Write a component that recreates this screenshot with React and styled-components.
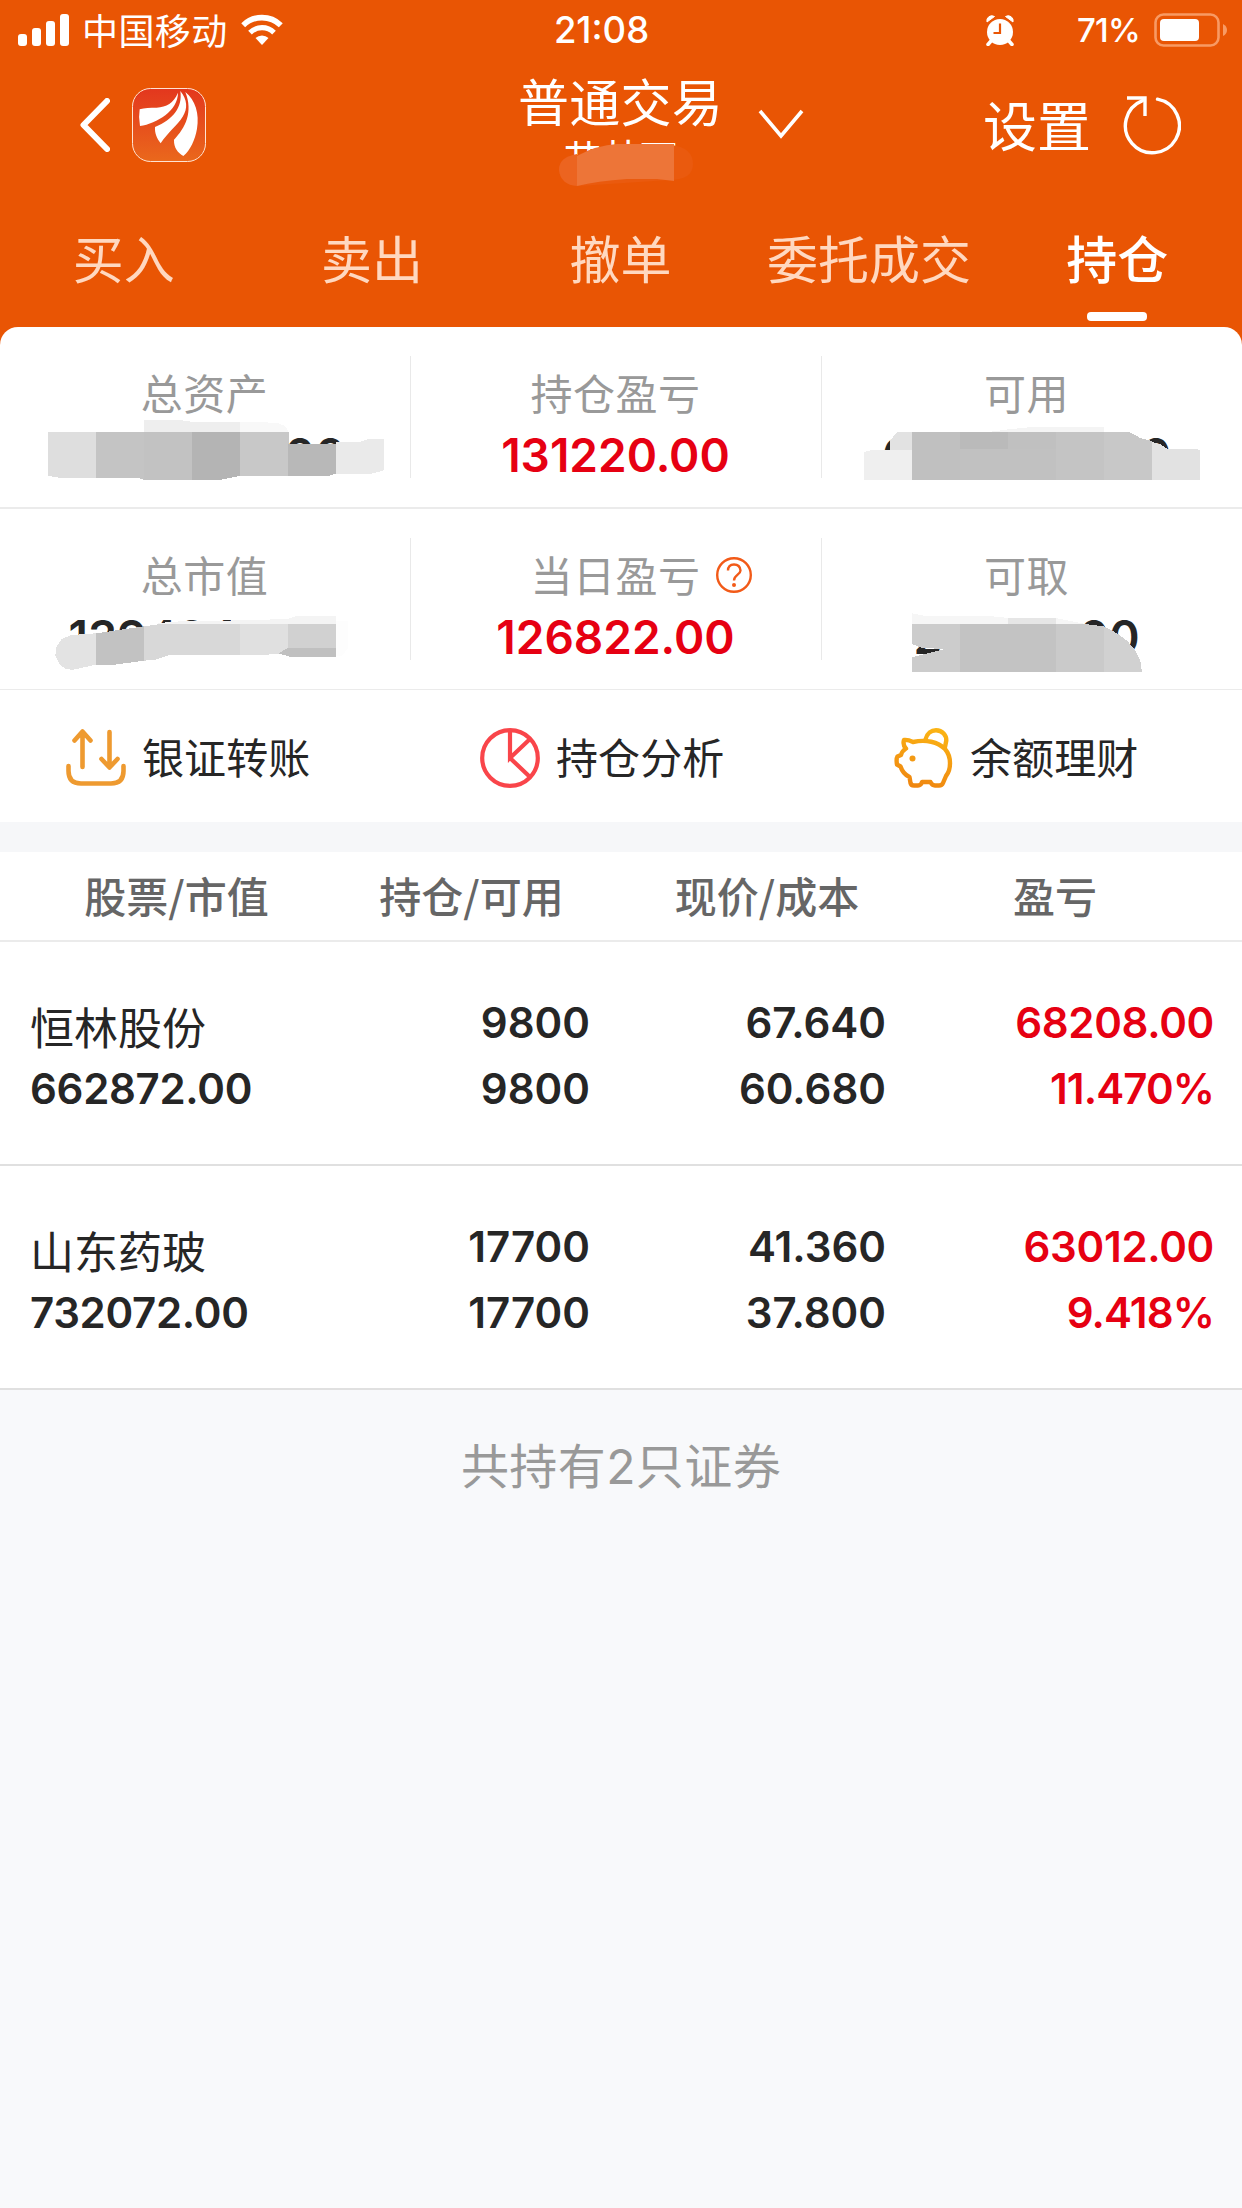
import React from "react";
import styled, { createGlobalStyle } from "styled-components";

const cjk = `"Noto Sans CJK SC", sans-serif`;
const latin = `Inter, "Noto Sans CJK SC", sans-serif`;

const GlobalStyle = createGlobalStyle`
  * {
    box-sizing: border-box;
  }

  body {
    margin: 0;
    background: #f8f9fb;
    font-family: ${cjk};
    color: #262626;
  }
`;

const Page = styled.div`
  width: 1242px;
  min-height: 2208px;
  background: #f8f9fb;
  overflow: hidden;
`;

const Header = styled.header`
  height: 347px;
  background: #e95504;
  color: #fff;
`;

const StatusBar = styled.div`
  display: grid;
  grid-template-columns: 1fr auto 1fr;
  align-items: center;
  height: 60px;
  padding: 0 14px 0 18px;
`;

const StatusLeft = styled.div`
  display: flex;
  align-items: center;
`;

const StatusRight = styled.div`
  display: flex;
  align-items: center;
  justify-content: flex-end;
`;

const Carrier = styled.span`
  margin: 0 13px 0 12px;
  padding-bottom: 3px;
  font-size: 36px;
  letter-spacing: 0.4px;
  line-height: 56px;
`;

const Clock = styled.span`
  margin-right: 43px;
  font-family: ${latin};
  font-size: 36.5px;
  font-weight: 500;
  line-height: 60px;
`;

const BatteryText = styled.span`
  margin: 0 14px 0 63px;
  font-family: ${latin};
  font-size: 33px;
  font-weight: 500;
  letter-spacing: -0.8px;
  line-height: 60px;
`;

const NavBar = styled.div`
  display: grid;
  grid-template-columns: 1fr auto 1fr;
  height: 148px;
  padding: 0 61px 0 80px;
`;

const NavLeft = styled.div`
  display: flex;
  align-items: center;
  gap: 22px;
  height: 130px;
`;

const NavRight = styled.div`
  display: flex;
  align-items: center;
  justify-content: flex-end;
  gap: 32px;
  height: 130px;
`;

const AccountPicker = styled.div`
  display: flex;
  gap: 35px;
  margin-left: 61px;
  padding-top: 5px;
`;

const AccountNames = styled.div`
  position: relative;
  display: flex;
  flex-direction: column;
  align-items: center;
`;

const AccountType = styled.span`
  font-size: 51px;
  letter-spacing: 0.3px;
  line-height: 70px;
`;

const AccountOwner = styled.span`
  font-size: 38px;
  line-height: 40px;
`;

const OwnerMask = styled.svg`
  position: absolute;
  left: 39px;
  top: 75px;
`;

const PickerArrow = styled.svg`
  margin-top: 44px;
`;

const Settings = styled.span`
  padding-bottom: 3px;
  font-size: 54px;
  line-height: 70px;
`;

const Tabs = styled.nav`
  display: flex;
  height: 119px;
`;

const Tab = styled.div`
  flex: 1;
  display: flex;
  flex-direction: column;
  align-items: center;
  padding: 13px 1px 0 0;
  font-size: 51px;
  line-height: 72px;
  font-weight: ${(props) => (props.$active ? 500 : 400)};
  color: ${(props) => (props.$active ? "#fff" : "#ffd8c0")};
`;

const TabMark = styled.span`
  width: 60px;
  height: 9px;
  margin-top: 19px;
  border-radius: 4px;
  background: #fff;
`;

const Card = styled.section`
  margin-top: -20px;
  border-radius: 18px 18px 0 0;
  background: #fff;
`;

const SummaryRow = styled.div`
  display: flex;
  height: ${(props) => (props.$last ? 181 : 182)}px;
  border-bottom: ${(props) => (props.$last ? "1px" : "2px")} solid #ebebeb;
`;

const SummaryCell = styled.div`
  position: relative;
  display: flex;
  flex-direction: column;
  align-items: center;
  width: 411px;
  padding: 35px 2px 0 0;
  background: ${(props) =>
    props.$divided
      ? "linear-gradient(#e9e9e9, #e9e9e9) right 29px / 1px 122px no-repeat"
      : "none"};
`;

const SummaryLabel = styled.div`
  position: relative;
  font-size: 42px;
  letter-spacing: 0.5px;
  line-height: 60px;
  color: #999;
`;

const HelpIcon = styled.svg`
  position: absolute;
  left: 186px;
  top: 13px;
`;

const SummaryValue = styled.div`
  display: flex;
  justify-content: space-between;
  width: ${(props) => (props.$width ? `${props.$width}px` : "auto")};
  margin-top: 3px;
  font-family: ${latin};
  font-size: 46px;
  font-weight: 600;
  line-height: 60px;
  color: ${(props) => (props.$red ? "#e60012" : "#262626")};
`;

const MaskLayer = styled.svg`
  position: absolute;
  left: 0;
  top: 0;
  width: 411px;
  height: 182px;
`;

const Actions = styled.div`
  display: flex;
  height: 132px;
`;

const Action = styled.div`
  display: flex;
  align-items: center;
  gap: 16px;
  width: 414px;
  padding: 4px 0 0 66px;
`;

const ActionLabel = styled.span`
  padding-bottom: 5px;
  font-size: 42px;
  letter-spacing: 0.1px;
  line-height: 60px;
`;

const Gap = styled.div`
  height: 30px;
  background: #f6f7f9;
`;

const Holdings = styled.section`
  background: #fff;
`;

const HoldingsHead = styled.div`
  display: grid;
  grid-template-columns: 295px 295px 296px 280px;
  height: 90px;
  padding-left: 29px;
  border-bottom: 2px solid #ebebeb;
`;

const HeadCell = styled.div`
  text-align: center;
  font-size: 42px;
  font-weight: 500;
  line-height: 86px;
  color: #666;
`;

const HoldingRow = styled.div`
  display: grid;
  grid-template-columns: 265px 295px 296px 328px;
  height: 224px;
  padding: 48px 28px 0 30px;
  border-bottom: 2px solid #e0e0e0;
`;

const HoldingCell = styled.div`
  display: flex;
  flex-direction: column;
  align-items: ${(props) => (props.$left ? "flex-start" : "flex-end")};
  font-family: ${latin};
  font-size: 42px;
  font-weight: 600;
  letter-spacing: ${(props) => (props.$left || props.$red ? "-0.3px" : "0")};
  line-height: 66px;
  color: ${(props) => (props.$red ? "#e60012" : "#262626")};
`;

const Percent = styled.span`
  letter-spacing: -0.9px;
`;

const StockName = styled.span`
  height: 66px;
  font-family: ${cjk};
  font-size: 44px;
  font-weight: 400;
  letter-spacing: 0;
  line-height: 72px;
`;

const Total = styled.p`
  margin: 0;
  padding-top: 37px;
  text-align: center;
  font-size: 48px;
  letter-spacing: 0.4px;
  line-height: 72px;
  color: #999;
`;

const TotalCount = styled.span`
  font-family: ${latin};
  font-weight: 400;
`;

const SignalIcon = () => (
  <svg width="52" height="32" viewBox="0 0 52 32" fill="#fff">
    <rect x="0" y="20" width="9" height="12" rx="3" />
    <rect x="14" y="14" width="9" height="18" rx="3" />
    <rect x="28" y="7" width="9" height="25" rx="3" />
    <rect x="42" y="0" width="9" height="32" rx="3" />
  </svg>
);

const WifiIcon = () => (
  <svg width="42" height="32" viewBox="0 0 42 32">
    <path d="M2.2 11.2a27 27 0 0 1 37.6 0" fill="none" stroke="#fff" strokeWidth="5.6" />
    <path d="M9 18.6a17 17 0 0 1 24 0" fill="none" stroke="#fff" strokeWidth="5.2" />
    <path d="M14.5 24a9.5 9.5 0 0 1 13 0L21 31z" fill="#fff" />
  </svg>
);

const AlarmIcon = () => (
  <svg width="28" height="31" viewBox="0 0 28 31">
    <circle cx="14" cy="17" r="13" fill="#fff" />
    <path d="M1 7a5 5 0 0 1 7.5-5.5zM27 7a5 5 0 0 0-7.5-5.5z" fill="#fff" stroke="#fff" />
    <path d="M5 26l-3 3.5M23 26l3 3.5" stroke="#fff" strokeWidth="3.5" strokeLinecap="round" />
    <path d="M14 8.5v9.5H7.5" fill="none" stroke="#e95504" strokeWidth="2.2" />
  </svg>
);

const BatteryIcon = () => (
  <svg width="74" height="34" viewBox="0 0 74 34">
    <rect x="1.5" y="1.5" width="63" height="31" rx="8" fill="none" stroke="#f89a64" strokeWidth="2.6" />
    <rect x="6" y="6" width="39" height="22" rx="4" fill="#fff" />
    <path d="M69 11q4 2 4 6t-4 6z" fill="#f89a64" />
  </svg>
);

const BackIcon = () => (
  <svg width="30" height="54" viewBox="0 0 30 54">
    <path d="M27 3L3.5 27 27 51" fill="none" stroke="#fff" strokeWidth="6" strokeLinecap="round" strokeLinejoin="round" />
  </svg>
);

const AppLogo = () => (
  <svg width="74" height="74" viewBox="0 0 222 222">
    <defs>
      <linearGradient id="logoBg" x1="0" y1="0" x2="0" y2="1">
        <stop offset="0" stopColor="#e3371e" />
        <stop offset="1" stopColor="#ea681c" />
      </linearGradient>
    </defs>
    <rect x="1.5" y="1.5" width="219" height="219" rx="54" fill="url(#logoBg)" stroke="#ffe3d2" strokeWidth="3" />
    <g fill="#fff">
      <path d="M23 64Q19 88 24 114C75 106 138 68 138 14 124 46 104 56 74 59 54 59 38 60 23 64z" />
      <path d="M145 9C166 34 168 62 152 86 136 112 108 132 86 166 74 150 68 136 69 117 124 94 152 58 145 9z" />
      <path d="M160 12C190 36 203 78 195 122 189 156 175 186 154 204 138 194 125 180 126 155 160 120 184 72 160 12z" />
    </g>
  </svg>
);

const RefreshIcon = () => (
  <svg width="58" height="59" viewBox="0 0 58 59" fill="none" stroke="#fff" strokeWidth="3.4">
    <path d="M34.5 3.2A27 27 0 1 1 19.500 4.600" strokeLinecap="round" />
    <path d="M4 2h18v18" />
  </svg>
);

const TransferIcon = () => (
  <svg width="60" height="60" viewBox="0 0 60 60" fill="none" stroke="#ee9a30" strokeWidth="4.6" strokeLinecap="round" strokeLinejoin="round">
    <path d="M16.5 39V4M8.5 12.5l8-9 8 9" />
    <path d="M43.5 4v35M35.5 31l8 8.500 8-8.500" />
    <path d="M2.5 38v5Q2.500 55.500 15 55.500h30Q57.500 55.500 57.500 43v-5" />
  </svg>
);

const PieIcon = () => (
  <svg width="60" height="60" viewBox="0 0 60 60" fill="none" stroke="#f9454a" strokeWidth="4.2">
    <circle cx="30" cy="30" r="27.8" />
    <path d="M30 2v28l20-19M30 30l20 19" />
  </svg>
);

const PiggyIcon = () => (
  <svg width="60" height="60" viewBox="0 0 60 60" fill="none" strokeWidth="4.4" strokeLinejoin="round" strokeLinecap="round">
    <defs>
      <linearGradient id="piggy" gradientUnits="userSpaceOnUse" x1="40" y1="0" x2="25" y2="60">
        <stop offset="0" stopColor="#fbb414" />
        <stop offset="1" stopColor="#ef8610" />
      </linearGradient>
    </defs>
    <g stroke="url(#piggy)">
      <path d="M10 12Q14 11.500 19 14C32 11 44 14 51 21 58 29 57 42 52 48L49 55Q48 57.500 45 57.500H41Q38 57.500 36.500 54H28Q27 57.500 24 57.500H20Q17 57.500 16.500 55L15.500 49Q9 46 6.500 38.500L3 36.500Q2 31 3.500 28.500L7 27Q8 23 12 20.500 8.500 17 10 12z" />
      <path d="M31.500 11.500C33 5 37.500 2.300 42 2.300 48.500 2.300 52.500 7.500 52.300 12.500L51 19" />
    </g>
    <circle cx="18.5" cy="30.5" r="3" fill="#f39a14" />
  </svg>
);

// mosaic patches, three units to a pixel, measured from the cell's corner
const masks = {
  assets: [
    ["432,279 540,279 580,285 720,285 720,315 432,315", "#eeeeee"],
    ["720,285 830,287 855,297 866,315 720,315", "#f8f8f8"],
    ["144,315 288,315 288,452 175,452 144,446", "#dedede"],
    ["288,315 432,315 432,458 412,452 288,452", "#c4c4c4"],
    ["432,315 576,315 576,458 432,458", "#c2c2c2"],
    ["576,315 720,315 720,447 665,458 576,458", "#b4b4b4"],
    ["720,315 866,315 866,447 720,447", "#c8c8c8"],
    ["864,351 1008,351 1008,440 985,447 864,447", "#b8b8b8"],
    ["1008,345 1080,345 1105,336 1152,336 1152,430 1110,441 1008,441", "#eaeaea"],
  ],
  market: [
    ["465,345 510,338 720,334 864,330 890,321 1008,321 1008,345", "#f4f4f4"],
    ["1008,335 1045,335 1045,418 1025,440 1008,440", "#fdfdfd"],
    ["288,373 215,378 185,390 168,415 166,440 178,465 198,481 220,482 288,467", "#e3e3e3"],
    ["288,373 432,352 432,455 345,467 288,467", "#c2c2c2"],
    ["432,352 480,345 720,345 720,438 510,438 462,453 432,455", "#d8d8d8"],
    ["720,345 864,345 864,440 845,433 790,438 720,438", "#e0e0e0"],
    ["864,345 1008,345 1008,417 864,417", "#d1d1d1"],
    ["890,417 1008,417 1008,443 870,443 835,433 864,417", "#c0c0c0"],
  ],
  available: [
    ["500,315 560,307 620,301 846,301 846,315", "#f4f4f4"],
    ["205,372 205,340 225,315 270,315 270,372", "#e2e2e2"],
    ["126,375 150,369 270,369 270,459 126,459", "#efefef"],
    ["270,315 414,315 414,459 270,459", "#c0c0c0"],
    ["414,315 558,315 558,366 414,366", "#bababa"],
    ["558,315 702,315 702,366 558,366", "#c0c0c0"],
    ["414,366 702,366 702,459 414,459", "#c1c1c1"],
    ["702,315 846,315 846,459 702,459", "#c4c4c4"],
    ["846,315 922,315 955,333 990,342 990,459 846,459", "#c8c8c8"],
    ["990,345 1015,352 1035,365 1120,365 1134,370 1134,459 990,459", "#e2e2e2"],
  ],
  withdrawable: [
    ["270,313 310,321 500,321 560,327 702,327 790,345 270,345", "#f6f6f6"],
    ["558,327 702,327 702,345 558,345", "#e6e6e6"],
    ["270,345 414,345 414,489 270,489 270,445 365,421 330,418 300,417 270,405", "#cccccc"],
    ["414,345 702,345 702,489 414,489", "#c3c3c3"],
    ["702,345 790,345 846,352 846,489 702,489", "#cacaca"],
    ["846,352 885,373 915,395 940,425 955,455 960,489 846,489", "#d1d1d1"],
  ],
};

const Mask = ({ patches }) => (
  <MaskLayer viewBox="0 0 1233 546" shapeRendering="crispEdges">
    {patches.map(([points, fill]) => (
      <polygon key={points} points={points} fill={fill} />
    ))}
  </MaskLayer>
);

const tabs = ["买入", "卖出", "撤单", "委托成交", "持仓"];

const summary = [
  [
    { label: "总资产", parts: ["", "00"], width: 282, mask: "assets" },
    { label: "持仓盈亏", value: "131220.00" },
    { label: "可用", parts: ["6", "0"], width: 289, mask: "available" },
  ],
  [
    { label: "总市值", parts: ["1394944.00"], mask: "market" },
    { label: "当日盈亏", value: "126822.00", help: true },
    { label: "可取", parts: ["2", "00"], width: 226, mask: "withdrawable" },
  ],
];

const actions = [
  { label: "银证转账", icon: <TransferIcon /> },
  { label: "持仓分析", icon: <PieIcon /> },
  { label: "余额理财", icon: <PiggyIcon /> },
];

const columns = ["股票/市值", "持仓/可用", "现价/成本", "盈亏"];

const holdings = [
  {
    name: "恒林股份",
    market: "662872.00",
    amount: ["9800", "9800"],
    price: ["67.640", "60.680"],
    profit: ["68208.00", "11.470%"],
  },
  {
    name: "山东药玻",
    market: "732072.00",
    amount: ["17700", "17700"],
    price: ["41.360", "37.800"],
    profit: ["63012.00", "9.418%"],
  },
];

function App() {
  return (
    <Page>
      <GlobalStyle />
      <Header>
        <StatusBar>
          <StatusLeft>
            <SignalIcon />
            <Carrier>中国移动</Carrier>
            <WifiIcon />
          </StatusLeft>
          <Clock>21:08</Clock>
          <StatusRight>
            <AlarmIcon />
            <BatteryText>71%</BatteryText>
            <BatteryIcon />
          </StatusRight>
        </StatusBar>

        <NavBar>
          <NavLeft>
            <BackIcon />
            <AppLogo />
          </NavLeft>
          <AccountPicker>
            <AccountNames>
              <AccountType>普通交易</AccountType>
              <AccountOwner>艹廾丁</AccountOwner>
              <OwnerMask width="138" height="48" viewBox="0 0 138 48">
                <path d="M20 15Q50 3 70 5H115Q136 8 136 24T112 40L22 46Q2 44 2 30T20 15z" fill="#ea5a0e" />
                <path d="M2 30Q2 17 20 14V46Q4 45 2 30z" fill="#ec6420" />
                <path d="M20 16Q40 5 60 4H117V41L100 39H70Q40 41 20 46z" fill="#ed7538" />
              </OwnerMask>
            </AccountNames>
            <PickerArrow width="46" height="30" viewBox="0 0 46 30">
              <path d="M2 2l21 25L44 2" fill="none" stroke="#fff" strokeWidth="3.6" />
            </PickerArrow>
          </AccountPicker>
          <NavRight>
            <Settings>设置</Settings>
            <RefreshIcon />
          </NavRight>
        </NavBar>

        <Tabs>
          {tabs.map((tab) => (
            <Tab key={tab} $active={tab === "持仓"}>
              {tab}
              {tab === "持仓" && <TabMark />}
            </Tab>
          ))}
        </Tabs>
      </Header>

      <Card>
        {summary.map((row, index) => (
          <SummaryRow key={index} $last={index === 1}>
            {row.map((cell, i) => (
              <SummaryCell key={cell.label} $divided={i < 2}>
                <SummaryLabel>
                  {cell.label}
                  {cell.help && (
                    <HelpIcon width="36" height="36" viewBox="0 0 36 36" fill="none" stroke="#f25a18">
                      <circle cx="18" cy="18" r="16.8" strokeWidth="2.4" />
                      <path d="M12 13.500Q12 7.500 18 7.500T24.500 13.500C24.500 17.500 18 18 18 23.500" strokeWidth="2.4" />
                      <circle cx="18" cy="28" r="2" fill="#f25a18" stroke="none" />
                    </HelpIcon>
                  )}
                </SummaryLabel>
                {cell.value ? (
                  <SummaryValue $red>{cell.value}</SummaryValue>
                ) : (
                  <SummaryValue $width={cell.width}>
                    {cell.parts.map((part, p) => (
                      <span key={p}>{part}</span>
                    ))}
                  </SummaryValue>
                )}
                {cell.mask && <Mask patches={masks[cell.mask]} />}
              </SummaryCell>
            ))}
          </SummaryRow>
        ))}
        <Actions>
          {actions.map((action) => (
            <Action key={action.label}>
              {action.icon}
              <ActionLabel>{action.label}</ActionLabel>
            </Action>
          ))}
        </Actions>
      </Card>

      <Gap />

      <Holdings>
        <HoldingsHead>
          {columns.map((column) => (
            <HeadCell key={column}>{column}</HeadCell>
          ))}
        </HoldingsHead>
        {holdings.map((stock) => (
          <HoldingRow key={stock.name}>
            <HoldingCell $left>
              <StockName>{stock.name}</StockName>
              <span>{stock.market}</span>
            </HoldingCell>
            <HoldingCell>
              <span>{stock.amount[0]}</span>
              <span>{stock.amount[1]}</span>
            </HoldingCell>
            <HoldingCell>
              <span>{stock.price[0]}</span>
              <span>{stock.price[1]}</span>
            </HoldingCell>
            <HoldingCell $red>
              <span>{stock.profit[0]}</span>
              <Percent>{stock.profit[1]}</Percent>
            </HoldingCell>
          </HoldingRow>
        ))}
      </Holdings>

      <Total>
        共持有<TotalCount>2</TotalCount>只证券
      </Total>
    </Page>
  );
}

export default App;
